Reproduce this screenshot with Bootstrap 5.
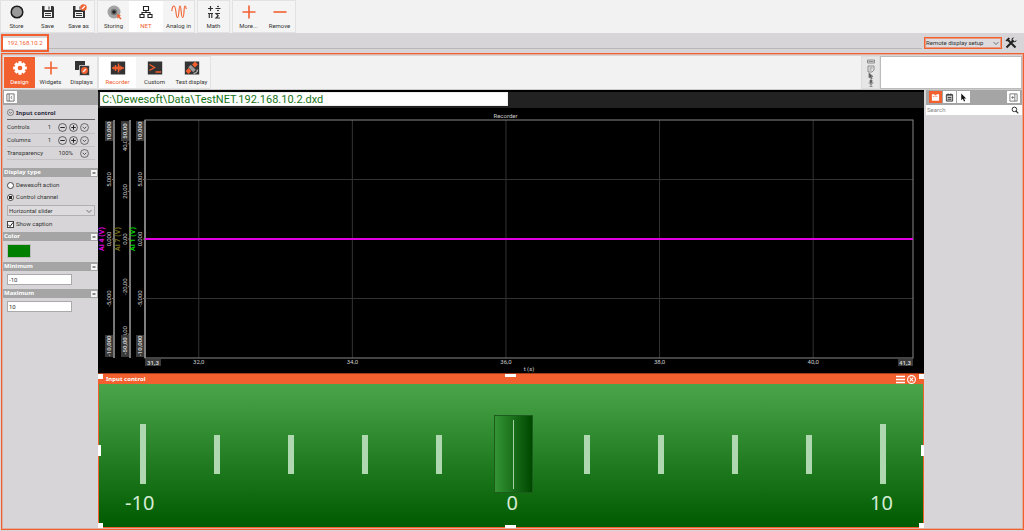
<!DOCTYPE html>
<html lang="en">
<head>
<meta charset="utf-8">
<meta name="viewport" content="width=device-width, initial-scale=1">
<title>Remote display setup</title>
<link href="https://cdn.jsdelivr.net/npm/bootstrap@5.3.0/dist/css/bootstrap.min.css" rel="stylesheet">
<style>
:root{--accent:#f26030;--pane:#d7d5d7;--bar:#f2f2f2;--head:#a5a5a5}
body{font-family:Roboto,"Noto Sans",sans-serif;font-size:6px;line-height:8px;color:#333;background:var(--pane)}
button,input,select{font:inherit;color:inherit}
button{padding:0;border:0;background:none}
svg{display:block;flex:none}
.toolbar{background:var(--bar)}
.toolbar-main{gap:2px}
.toolbar-display{border-bottom:1px solid #ccc}
.tool-group{border:1px solid #e2e2e2;background:#f4f4f4}
.tool{width:31px;height:31px;display:flex;flex-direction:column;align-items:center;gap:2px;padding-top:3px;white-space:nowrap}
.tool svg{width:16px;height:16px}
.tool.mid{width:34px}
.tool.wide{width:37px}
.tool.picked{background:#fff;color:var(--accent)}
.tool.filled{background:var(--accent);color:#fff}
.strip{height:20px;padding:1px 7px 1px 1px}
.strip-line{border-bottom:1px solid #b8b8b8;height:15px;margin-right:2px}
.setup{gap:3px}
.ip-tab{width:48px;height:18px;border:2px solid var(--accent);background:linear-gradient(#d7d5d7 2px,#fff 2px,#fff 13px,#d7d5d7 13px);color:var(--accent);text-align:center;text-decoration:none;padding-top:3px}
.setup-select{width:78px;height:12px;border:1px solid var(--accent);outline:1px solid #f2603088;outline-offset:-2px}
.flat-select{appearance:none;border-radius:0;padding:0 1px;line-height:8px;background:#dddbdd url("data:image/svg+xml,%3Csvg xmlns='http://www.w3.org/2000/svg' viewBox='0 0 8 8'%3E%3Cpath d='M1.5 3 4 5.500 6.500 3' fill='none' stroke='%23555' stroke-width='.8'/%3E%3C/svg%3E") no-repeat right 1px center/8px 8px}
.frame{border:1px solid var(--accent);outline:1px solid #f2603055;outline-offset:-2px;margin:0 0 1px 1px;padding:2px 1px 1px 1px}
.side{width:95px;background:var(--pane)}
.side-right{width:96px;margin-left:2px}
.side-head{height:15px;background:var(--head);padding:1px;gap:1px}
.side-right .side-head{padding:1px 2px 1px 3px}
.icon-btn{width:13px;height:12px;background:#fff;display:flex;align-items:center;justify-content:center}
.icon-btn.on{background:var(--accent)}
.icon-btn svg{width:9px;height:9px}
.group-title,.sect,.control-head{font-family:"Noto Sans",sans-serif;font-weight:700}
.group-title{color:#28283c;border-bottom:1px solid #666;margin:0 3px 0 4px;height:15px;padding-top:4px;gap:2px}
.prop-list{padding-top:1px;margin-bottom:8px}
.prop{height:13px;border-bottom:1px solid #c4c2c4;margin:0 3px 0 4px;padding-right:6px;gap:2px}
.prop svg{width:9px;height:9px}
.prop output{text-align:right;margin-right:5px}
.sect{background:var(--head);color:#fff;height:9px;padding:0 1px;line-height:9px}
.sect svg{width:6px;height:6px}
.options{padding:2px 0}
.field{margin-left:4px;gap:2px;height:12px}
.tick{appearance:none;width:7px;height:7px;margin:0;border:1px solid #444;background:#fff;flex:none}
.tick[type=radio]{border-radius:50%}
.tick[type=radio]:checked{background:radial-gradient(#222 40%,#fff 50%)}
.tick[type=checkbox]:checked{background:#fff url("data:image/svg+xml,%3Csvg xmlns='http://www.w3.org/2000/svg' viewBox='0 0 7 7'%3E%3Cpath d='M1 3.500 3 5.500 6 1.500' fill='none' stroke='%23222'/%3E%3C/svg%3E") center/7px 7px}
.kind-select{width:88px;height:11px;margin:2px 0 2px 4px;border:1px solid #b0b0b0}
.swatch{width:24px;height:14px;margin:3px 0 4px 4px;background:green;border:1px solid #f4f4f4;outline:1px solid #bbb;outline-offset:-1px}
.num{width:65px;height:11px;margin:3px 0 4px 4px;padding:0 1px;border:1px solid #aaa;border-radius:0;background:#fff}
.search{height:10px;background:#fff;padding:0 3px 0 1px}
.search input{border:0;padding:0;background:none;outline:0;min-width:0}
.search input::placeholder{color:#888}
.stage{background:#000;min-width:0}
.path-row{background:#222;border-top:2px solid #000;padding:0 2px 1px;height:18px}
.path-box{width:408px;height:14px;padding:0 1px;border:1px solid #eee;border-radius:0;background:#fff;color:#177317;font-size:11px;line-height:12px}
.chart-title{color:#ccc;text-align:center;padding-right:11px;height:12px;padding-top:4px}
.axis{width:16px;height:100%;overflow:visible}
.axis-last{width:15px}
.plot{height:100%;min-width:0;overflow:visible}
.chart-row{padding:0 11px 15px 0;min-height:200px}
.chart-row text{font-size:6px;fill:#ccc;text-anchor:middle}
.chart-row .name{font-size:7px;font-weight:700}
.chart-row .limit{font-weight:700}
.control{height:155px;background:var(--accent);padding:0 1px 1px;border-top:1px solid #a33c18}
.control-head{height:10px;color:#fff;padding:0 7px 0 7px;gap:2px}
.fader{background:linear-gradient(#4ba64b,#005a00);padding:31px 20px 0 24px;color:#d5ecd5}
.fader-track{display:grid;align-items:center}
.fader-track>*{grid-area:1/1}
.marks{padding:0 17px}
.marks i{width:6px;height:39px;background:#b0d8b0}
.marks i.end{height:60px}
.fader-input{appearance:none;width:100%;height:78px;background:none;margin:0}
.fader-input::-webkit-slider-thumb{appearance:none;width:39px;height:78px;border:1px solid #1d5c1d;background:linear-gradient(#a8cfa8,#a8cfa8) center/1px 69px no-repeat,linear-gradient(90deg,#339433,#004800)}
.fader-input::-moz-range-thumb{width:39px;height:78px;border-radius:0;border:1px solid #1d5c1d;background:linear-gradient(90deg,#339433,#004800)}
.scale{font-family:"Noto Sans",sans-serif;font-size:20px;line-height:20px;padding:0 10px 0 2px}
.grip{position:absolute;background:#fff;width:5px;height:5px}
.grip.h{width:11px;height:3px;left:50%;margin-left:-6px}
.grip.v{width:3px;height:11px;top:50%;margin-top:-6px}
.dock{width:19px;background:#e6e6e6;border:1px solid #ddd}
.preview{width:142px;background:#fff;border:1px solid #bbb}
</style>
</head>
<body class="d-flex flex-column vh-100 overflow-hidden">
<svg width="0" height="0" class="position-absolute" aria-hidden="true">
<defs>
<symbol id="store" viewBox="0 0 16 16"><circle cx="8" cy="8" r="5.800" fill="#999" stroke="#1c1c1c" stroke-width="1.500"/></symbol>
<symbol id="save" viewBox="0 0 16 16"><path d="M2 2h11l1 1v11H2z" fill="#333"/><path d="M4.500 2h6.500v4H4.500zM4 8h8v5H4z" fill="#f4f4f4"/><path d="M9 2.500v3M5 9.500h6M5 11.500h6" stroke="#333"/></symbol>
<symbol id="saveas" viewBox="0 0 16 16"><use href="#save"/><circle cx="12.500" cy="3.500" r="3.200" fill="#f26030"/><path d="m11 5 3-3" stroke="#fff" stroke-width="1.200"/></symbol>
<symbol id="storing" viewBox="0 0 16 16"><circle cx="8" cy="8" r="6.500" fill="#a3a3a3"/><circle cx="8" cy="8" r="3.200" fill="#777"/><circle cx="8" cy="8" r="1.800" fill="#222"/><path d="m11 10 4 1.500-1.500 1 2 2-1 1-2-2-1 1.500z" fill="#f26030"/></symbol>
<symbol id="net" viewBox="0 0 16 16"><path d="M5.500 2.500h5v4h-5zM2 10.500h4v3H2zM10 10.500h4v3h-4zM8 6.500v2M4 10.500v-2h8v2" fill="none" stroke="#222" stroke-width="1.100"/></symbol>
<symbol id="wave" viewBox="0 0 16 16"><path d="M.8 7C1.200 3 2 2 3 2c2.500 0 1.500 11.500 3.500 11.500S7.500 2 9 2s.8 11.500 2.700 11.500S12.500 2 14 2c.8 0 1 1.500 1.300 3" fill="none" stroke="#f26030" stroke-width="1.100"/></symbol>
<symbol id="math" viewBox="0 0 16 16"><path d="M2 4.500h5M4.500 2v5M9.500 4.500h5M2 9.500h5M3.300 9.500V14M5.800 9.500V14M14 9.500h-4l2.200 2.200L10 14h4" fill="none" stroke="#333" stroke-width="1.200"/><circle cx="12" cy="2.500" r=".8"/><circle cx="12" cy="6.500" r=".8"/></symbol>
<symbol id="plus" viewBox="0 0 16 16"><path d="M8 1.500v13M1.500 8h13" stroke="#f26030" stroke-width="1.600"/></symbol>
<symbol id="minus" viewBox="0 0 16 16"><path d="M1.500 8h13" stroke="#f26030" stroke-width="1.600"/></symbol>
<symbol id="gear" viewBox="0 0 16 16"><g stroke="#fff" stroke-width="3.200"><path d="M8 1.200v13.600M1.200 8h13.600M3.300 3.300l9.400 9.400M12.700 3.300l-9.400 9.400"/></g><circle cx="8" cy="8" r="5.200" fill="#fff"/><circle cx="8" cy="8" r="2.300" fill="#f26030"/></symbol>
<symbol id="displays" viewBox="0 0 16 16"><path d="M1 1h10v9H1z" fill="#333"/><path d="M5.500 5.500h10v10h-10z" fill="#3a3a3a" stroke="#eee" stroke-width=".7"/><circle cx="10.500" cy="10.500" r="3.400" fill="#f26030"/><path d="m9 12 3-3" stroke="#eee" stroke-width="1.200"/></symbol>
<symbol id="recorder" viewBox="0 0 16 16"><path d="M.8 1.500h14.400v13H.8z" fill="#333"/><path d="M2 8h12M4 6.500v3M5.500 5v6M7 6.500v3M8.500 3.500v9M10 5.500v5M11.500 6.500v3" stroke="#f26030" stroke-width="1.300"/></symbol>
<symbol id="console" viewBox="0 0 16 16"><path d="M.8 1.500h14.400v13H.8z" fill="#333"/><path d="m2.500 4.500 5 3-5 3M8.500 12H14" fill="none" stroke="#f26030" stroke-width="1.400"/></symbol>
<symbol id="sat" viewBox="0 0 16 16"><path d="M.8 1.500h14.400v13H.8z" fill="#333"/><path d="m3 12.500 3-3M9.500 6l3-3" stroke="#f26030" stroke-width="4"/><path d="m5.500 6 5 5" stroke="#999" stroke-width="3.500"/><path d="M9.500 13.500a4 4 0 0 0 4-4" fill="none" stroke="#aaa" stroke-width="1.500"/></symbol>
<symbol id="tools" viewBox="0 0 12 12"><path d="m1.500 10.500 7-7M2.500 2.500l8 8" stroke="#222" stroke-width="2"/><path d="M11.500 3 9.500 4.500 7.500 2.500 9 .5C6.500.5 6 3 7 4.500L8 5c1.500.5 3.500 0 3.500-2z" fill="#222"/><path d="m.5 3.500 3-3 1.500 1L2 4.500z" fill="#222"/></symbol>
<symbol id="panel" viewBox="0 0 10 10"><path d="M1 1h8v8H1zM3.500 1v8M7 3.500 5.300 5 7 6.500" fill="none" stroke="#555" stroke-width=".9"/></symbol>
<symbol id="panel-r" viewBox="0 0 10 10"><path d="M1 1h8v8H1zM6.500 1v8M3 5h3M4.500 3.500 3 5l1.500 1.500" fill="none" stroke="#666" stroke-width=".9"/></symbol>
<symbol id="c-minus" viewBox="0 0 10 10"><circle cx="5" cy="5" r="4.400" fill="none" stroke="#333" stroke-width=".8"/><path d="M2.500 5h5" stroke="#222" stroke-width="1.100"/></symbol>
<symbol id="c-plus" viewBox="0 0 10 10"><use href="#c-minus"/><path d="M5 2.500v5" stroke="#222" stroke-width="1.100"/></symbol>
<symbol id="c-down" viewBox="0 0 10 10"><circle cx="5" cy="5" r="4.400" fill="none" stroke="#444" stroke-width=".8"/><path d="M3 4.200 5 6.200l2-2" fill="none" stroke="#333" stroke-width=".9"/></symbol>
<symbol id="fold" viewBox="0 0 6 6"><path d="M0 0h6v6H0z" fill="#f4f4f4"/><path d="M1.500 3h3" stroke="#222"/></symbol>
<symbol id="folder" viewBox="0 0 10 10"><path d="M1 1.500h3v1h2v-1h3v7H1z" fill="#fff"/><path d="M2 3.800h6" stroke="#f26030" stroke-dasharray="1 1"/></symbol>
<symbol id="sheet" viewBox="0 0 10 10"><path d="M1.500 2h7v7h-7z" fill="#ccc" stroke="#333"/><path d="M1.500 2h7M3.500 .5v2M6.500 .5v2M3 5h4M3 7h4" stroke="#333"/></symbol>
<symbol id="cursor" viewBox="0 0 10 10"><path d="M2.500.5v7.500l1.800-1.500L5.500 9.500l1.300-.6-1.200-2.700H8z" fill="currentColor"/></symbol>
<symbol id="lens" viewBox="0 0 8 8"><circle cx="3.400" cy="3.400" r="2.300" fill="none" stroke="#333"/><path d="m5 5 2.300 2.300" stroke="#333" stroke-width="1.200"/></symbol>
</defs>
</svg>

<nav class="toolbar toolbar-main d-flex" aria-label="Main">
  <div class="tool-group d-flex">
    <button class="tool"><svg><use href="#store"/></svg>Store</button>
    <button class="tool"><svg><use href="#save"/></svg>Save</button>
    <button class="tool"><svg><use href="#saveas"/></svg>Save as</button>
  </div>
  <div class="tool-group d-flex">
    <button class="tool"><svg><use href="#storing"/></svg>Storing</button>
    <button class="tool mid picked"><svg><use href="#net"/></svg>NET</button>
    <button class="tool"><svg><use href="#wave"/></svg>Analog in</button>
  </div>
  <div class="tool-group d-flex">
    <button class="tool"><svg><use href="#math"/></svg>Math</button>
  </div>
  <div class="tool-group d-flex">
    <button class="tool"><svg><use href="#plus"/></svg>More...</button>
    <button class="tool"><svg><use href="#minus"/></svg>Remove</button>
  </div>
</nav>

<div class="strip d-flex">
  <a href="#" class="ip-tab">192.168.10.2</a>
  <div class="strip-line flex-grow-1"></div>
  <div class="setup d-flex align-items-center">
    <select class="flat-select setup-select" aria-label="Setup"><option>Remote display setup</option></select>
    <button aria-label="Tools"><svg width="12" height="12"><use href="#tools"/></svg></button>
  </div>
</div>

<div class="frame d-flex flex-column flex-grow-1">
  <nav class="toolbar toolbar-display d-flex" aria-label="Display">
    <div class="tool-group d-flex">
      <button class="tool filled"><svg><use href="#gear"/></svg>Design</button>
      <button class="tool"><svg><use href="#plus"/></svg>Widgets</button>
      <button class="tool"><svg><use href="#displays"/></svg>Displays</button>
    </div>
    <div class="tool-group d-flex">
      <button class="tool wide picked"><svg><use href="#recorder"/></svg>Recorder</button>
      <button class="tool wide"><svg><use href="#console"/></svg>Custom</button>
      <button class="tool wide"><svg><use href="#sat"/></svg>Test display</button>
    </div>
    <div class="dock ms-auto d-flex flex-column align-items-center justify-content-center">
      <svg width="10" height="30" viewBox="0 0 10 30" fill="none" stroke="#777" stroke-width=".8"><path d="M1.500 2h7v3h-7zM2.500 3.500h5M2 8h6v4l-2 2H2zM3.500 10h3M3.500 12h2M5 24v4M3 24.500c0 2.500 4 2.500 4 0M3.500 28.500h3"/><path d="M3 15v5l1.200-1 1 2 1-.5-1-2H7zM4 22h2v3H4z" fill="#555"/></svg>
    </div>
    <div class="preview"></div>
  </nav>

  <main class="d-flex flex-grow-1">
    <aside class="side flex-shrink-0">
      <div class="side-head"><button class="icon-btn" aria-label="Collapse"><svg><use href="#panel"/></svg></button></div>
      <div class="group-title d-flex"><svg width="7" height="7"><use href="#c-down"/></svg>Input control</div>
      <div class="prop-list">
        <div class="prop d-flex align-items-center"><span class="me-auto">Controls</span><output>1</output>
          <button aria-label="Fewer"><svg><use href="#c-minus"/></svg></button><button aria-label="More"><svg><use href="#c-plus"/></svg></button><button aria-label="Pick"><svg><use href="#c-down"/></svg></button></div>
        <div class="prop d-flex align-items-center"><span class="me-auto">Columns</span><output>1</output>
          <button aria-label="Fewer"><svg><use href="#c-minus"/></svg></button><button aria-label="More"><svg><use href="#c-plus"/></svg></button><button aria-label="Pick"><svg><use href="#c-down"/></svg></button></div>
        <div class="prop d-flex align-items-center"><span class="me-auto">Transparency</span><output>100%</output>
          <button aria-label="Pick"><svg><use href="#c-down"/></svg></button></div>
      </div>

      <div class="sect d-flex align-items-center justify-content-between">Display type<button aria-label="Fold"><svg><use href="#fold"/></svg></button></div>
      <div class="options">
        <div class="field d-flex align-items-center"><input class="tick" type="radio" name="kind" id="act"><label for="act">Dewesoft action</label></div>
        <div class="field d-flex align-items-center"><input class="tick" type="radio" name="kind" id="chan" checked><label for="chan">Control channel</label></div>
        <select class="flat-select kind-select d-block" aria-label="Control kind"><option>Horizontal slider</option></select>
        <div class="field d-flex align-items-center"><input class="tick" type="checkbox" id="cap" checked><label for="cap">Show caption</label></div>
      </div>

      <div class="sect d-flex align-items-center justify-content-between">Color<button aria-label="Fold"><svg><use href="#fold"/></svg></button></div>
      <button class="swatch d-block" aria-label="Pick color"></button>
      <div class="sect d-flex align-items-center justify-content-between"><label for="min">Minimum</label><button aria-label="Fold"><svg><use href="#fold"/></svg></button></div>
      <input class="num d-block" id="min" value="-10">
      <div class="sect d-flex align-items-center justify-content-between"><label for="max">Maximum</label><button aria-label="Fold"><svg><use href="#fold"/></svg></button></div>
      <input class="num d-block" id="max" value="10">
    </aside>

    <section class="stage d-flex flex-column flex-grow-1">
      <div class="path-row"><input class="path-box d-block" aria-label="Data file" value="C:\Dewesoft\Data\TestNET.192.168.10.2.dxd"></div>
      <div class="chart-title">Recorder</div>
      <div class="chart-row d-flex flex-grow-1">
        <svg class="axis" id="axis4"></svg>
        <svg class="axis" id="axis7"></svg>
        <svg class="axis axis-last" id="axis1"></svg>
        <svg class="plot flex-grow-1 flex-shrink-1" id="plot"></svg>
      </div>
      <div class="control d-flex flex-column position-relative">
        <div class="control-head d-flex align-items-center"><span class="me-auto">Input control</span>
          <button aria-label="Menu"><svg width="9" height="9" viewBox="0 0 9 9"><path d="M0 1.500h9M0 4.500h9M0 7.500h9" stroke="#fff" stroke-width="1.600"/></svg></button>
          <button aria-label="Close"><svg width="9" height="9" viewBox="0 0 9 9" fill="none" stroke="#fff" stroke-width="1.100"><circle cx="4.500" cy="4.500" r="3.900"/><path d="m2.700 2.700 3.600 3.600m0-3.600L2.700 6.300"/></svg></button>
        </div>
        <div class="fader flex-grow-1">
          <div class="fader-track">
            <div class="marks d-flex align-items-center justify-content-between"><i class="end"></i><i></i><i></i><i></i><i></i><i></i><i></i><i></i><i></i><i></i><i class="end"></i></div>
            <input class="fader-input" type="range" min="-10" max="10" value="0" aria-label="Input control">
          </div>
          <div class="scale d-flex justify-content-between"><span>-10</span><span>0</span><span>10</span></div>
        </div>
        <span class="grip top-0 start-0"></span><span class="grip top-0 end-0"></span><span class="grip bottom-0 start-0"></span><span class="grip bottom-0 end-0"></span>
        <span class="grip h top-0"></span><span class="grip h bottom-0"></span><span class="grip v start-0"></span><span class="grip v end-0"></span>
      </div>
    </section>

    <aside class="side side-right flex-shrink-0">
      <div class="side-head d-flex"><button class="icon-btn on" aria-label="Channels"><svg><use href="#folder"/></svg></button><button class="icon-btn" aria-label="Events"><svg><use href="#sheet"/></svg></button><button class="icon-btn" aria-label="Select"><svg color="#111"><use href="#cursor"/></svg></button><button class="icon-btn ms-auto" aria-label="Collapse"><svg><use href="#panel-r"/></svg></button></div>
      <div class="search d-flex align-items-center"><input class="flex-grow-1" placeholder="Search" aria-label="Search"><svg width="8" height="8"><use href="#lens"/></svg></div>
    </aside>
  </main>
</div>

<script src="https://cdn.jsdelivr.net/npm/bootstrap@5.3.0/dist/js/bootstrap.bundle.min.js"></script>
<script>
// Vertical axes: position in percent of the plot height, then the label.
const upright = (x, pct, text, cls = '', fill = '') =>
  `<svg x="${x}" y="${pct}%" overflow="visible"><text class="${cls}" ${fill ? `style="fill:${fill}"` : ''} transform="rotate(-90)">${text}</text></svg>`;
function axis(id, name, color, top, marks) {
  const el = document.getElementById(id), w = el.clientWidth || 16;
  let s = `<line x1="${w}" x2="${w}" y1="0" y2="100%" stroke="#777" stroke-width="2"/>`;
  for (const [p, t] of marks) s += upright(w - 3, p, t) + `<line x1="${w - 2}" x2="${w}" y1="${p}%" y2="${p}%" stroke="#777"/>`;
  s += `<rect x="${w - 9}" y="1" width="8" height="20" fill="#3a3a3a"/><svg y="100%" overflow="visible"><rect x="${w - 9}" y="-23" width="8" height="22" fill="#3a3a3a"/><text class="limit" transform="translate(${w - 3} -12) rotate(-90)">-${top}</text></svg>`;
  s += `<text class="limit" transform="translate(${w - 3} 11) rotate(-90)">${top}</text>`;
  el.innerHTML = s + upright(w - 10, 50, name, 'name', color);
}
axis('axis4', 'AI 4 (V)', '#e000e0', '10,000', [[25, '5,000'], [50, '0,000'], [75, '-5,000']]);
axis('axis7', 'AI 7 (V)', '#77701a', '50,00', [[10, '40,00'], [30, '20,00'], [50, '0,00'], [70, '-20,00'], [90, '-40,00']]);
axis('axis1', 'AI 1 (V)', '#00d800', '10,000', [[25, '5,000'], [50, '0,000'], [75, '-5,000']]);

let g = '';
for (const y of [25, 50, 75]) g += `<line x1="0" x2="100%" y1="${y}%" y2="${y}%" stroke="#333"/>`;
[[7, '32,0'], [27, '34,0'], [47, '36,0'], [67, '38,0'], [87, '40,0']].forEach(([x, t]) => {
  g += `<line x1="${x}%" x2="${x}%" y1="0" y2="100%" stroke="#333"/><svg x="${x}%" y="100%" overflow="visible"><text y="6">${t}</text></svg>`;
});
g += '<rect width="100%" height="100%" fill="none" stroke="#888"/>';
g += '<line x1="0" x2="100%" y1="50%" y2="50%" stroke="#e000e0" stroke-width="2"/>';
g += '<svg y="100%" overflow="visible"><rect y="1" width="16" height="7" fill="#3a3a3a"/><text class="limit" x="8" y="7">31,3</text></svg>';
g += '<svg x="100%" y="100%" overflow="visible"><rect x="-15" y="1" width="15" height="7" fill="#3a3a3a"/><text class="limit" x="-8" y="7">41,3</text></svg>';
g += '<svg x="50%" y="100%" overflow="visible"><text y="13">t (s)</text></svg>';
document.getElementById('plot').innerHTML = g;
</script>
</body>
</html>
